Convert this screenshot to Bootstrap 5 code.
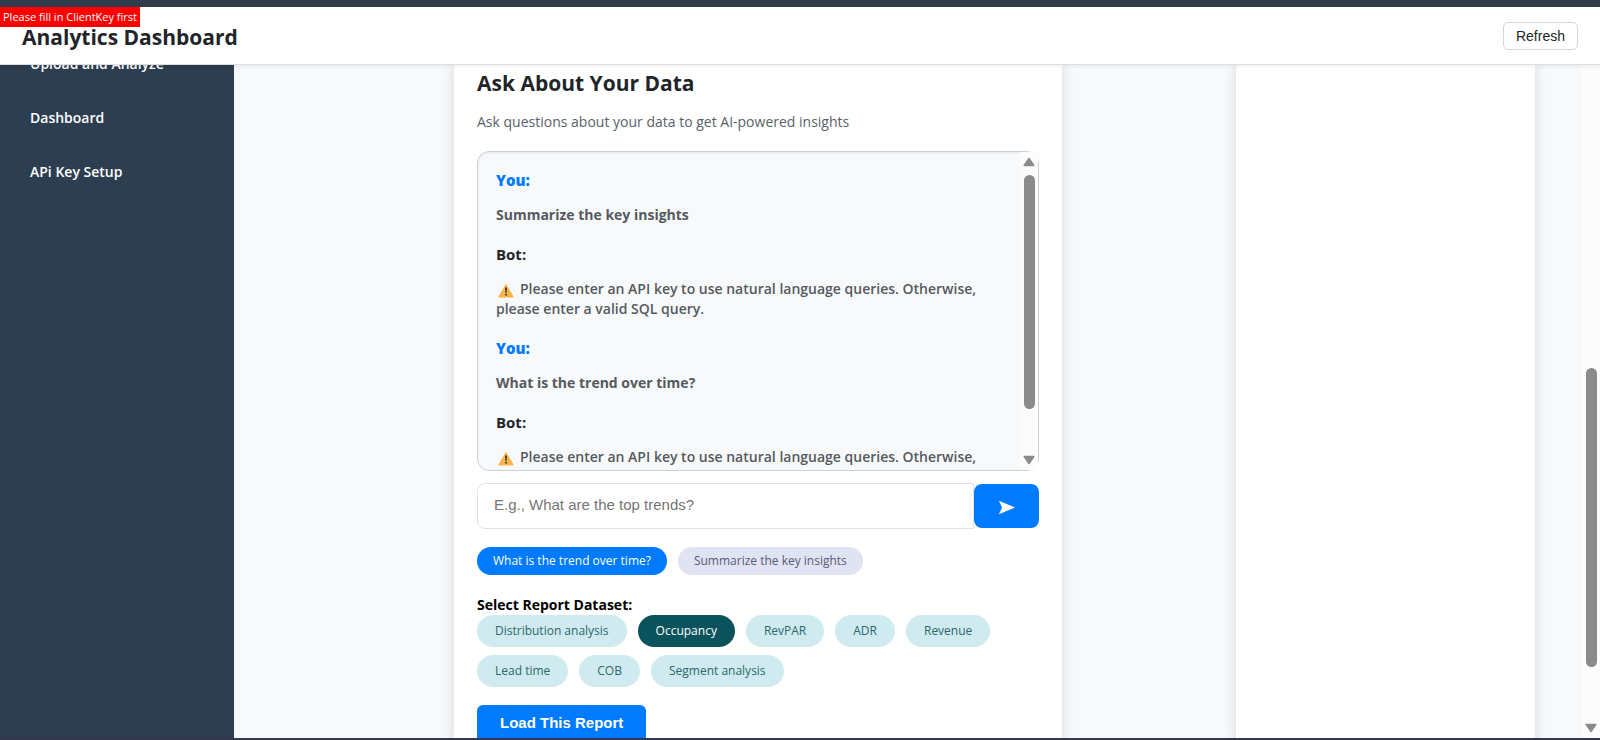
<!DOCTYPE html>
<html lang="en">
<head>
<meta charset="utf-8">
<meta name="viewport" content="width=device-width, initial-scale=1">
<title>Analytics Dashboard</title>
<link href="https://cdn.jsdelivr.net/npm/bootstrap@5.3.0/dist/css/bootstrap.min.css" rel="stylesheet">
<style>
  body { font-family: "Open Sans", "Noto Sans", sans-serif; font-size: 14px; line-height: 20px; color: #212529; background: #f8f9fb; border-top: 7px solid #323c4c; border-bottom: 2px solid #34374f; }
  .topbar { height: 58px; border-bottom: 1px solid #dcdee2; box-shadow: 0 2px 4px rgba(0,0,0,.06); z-index: 2; padding: 0 22px; }
  .page-title, .section-title { font-size: 21px; line-height: 28px; font-weight: 700; }
  .page-title { padding-top: 2px; }
  .btn-refresh { font: 14px/18px "Liberation Sans", sans-serif; padding: 4px 12px; border: 1px solid #d3d6e0; border-radius: 5px; color: #212529; background: #fff; }
  .toast-error { background: #f00; color: #fff; font-size: 11px; line-height: 20px; padding: 0 3px; z-index: 3; }
  .sidebar { width: 234px; background: #2c3e50; }
  .sidebar .nav { margin-top: -28px; }
  .sidebar .nav-link { color: #fff; font-size: 14px; font-weight: 600; padding: 17px 30px; }
  .workspace { display: grid; grid-template-columns: 220fr 608fr 174fr 299fr 47fr; }
  .panel { background: #fff; box-shadow: 0 0 12px rgba(0,0,0,.14); min-width: 0; }
  .ask-panel { grid-column: 2; padding: 4px 23px 0; }
  .side-panel { grid-column: 4; }
  .lead-text { color: #5a6169; margin: 15px 0 19px; }
  .chat-box { height: 320px; background: #f8f9fb; border: 1px solid #ced0d8; border-radius: 12px; box-shadow: inset 0 1px 2px rgba(0,0,0,.08); }
  .chat-log { padding: 18px 18px 0; }
  .chat-log h3 { font-size: 15px; line-height: 20px; font-weight: 700; margin: 0 0 15px; }
  .chat-log .from-user { color: #007bff; font-weight: 800; }
  .chat-log p { margin: 0 0 19px; color: #555a60; font-weight: 600; }
  .chat-log .question { font-weight: 700; }
  .scroll-track { width: 18px; background: #fcfcfc; padding: 5px 0; }
  .scroll-thumb { width: 11px; border-radius: 6px; background: #8b8b8b; }
  .ask-input { font: 15px/20px "Liberation Sans", sans-serif; height: 46px; border: 1px solid #dde3ea; border-radius: 8px 0 0 8px; padding: 0 16px 4px; }
  .ask-input::placeholder { color: #757575; }
  .btn-send { width: 65px; height: 44px; background: #007bff; border: 0; border-radius: 8px; }
  .chip { border: 0; border-radius: 17px; white-space: nowrap; font-size: 12px; line-height: 20px; }
  .chip-prompt { padding: 4px 16px; background: #e0e3f1; color: #565b78; }
  .chip-prompt.active { background: #007bff; color: #fff; }
  .chip-data { padding: 6px 18px; background: #d0ebef; color: #2c666e; }
  .chip-data.active { background: #0b535c; color: #fff; }
  .chip-row { gap: 8px 11px; }
  .prompt-row { margin-top: 18px; }
  .dataset-label { font-size: 14px; line-height: 20px; }
  .btn-load { font: 700 15px/20px "Liberation Sans", sans-serif; padding: 8px 23px 12px; border: 0; border-radius: 6px; background: #007bff; color: #fff; margin-top: 18px; }
</style>
</head>
<body class="vh-100 d-flex flex-column overflow-hidden">
  <header class="topbar bg-white d-flex align-items-center justify-content-between position-relative flex-shrink-0">
    <div class="toast-error position-absolute top-0 start-0" role="alert">Please fill in ClientKey first</div>
    <h1 class="page-title mb-0">Analytics Dashboard</h1>
    <button type="button" class="btn-refresh">Refresh</button>
  </header>

  <div class="d-flex flex-fill overflow-hidden">
    <aside class="sidebar flex-shrink-0 overflow-hidden">
      <nav class="nav flex-column">
        <a class="nav-link" href="#upload">Upload and Analyze</a>
        <a class="nav-link" href="#dashboard">Dashboard</a>
        <a class="nav-link" href="#api-key">APi Key Setup</a>
      </nav>
    </aside>

    <main class="workspace flex-fill overflow-hidden">
      <section class="panel ask-panel">
        <h2 class="section-title m-0">Ask About Your Data</h2>
        <p class="lead-text">Ask questions about your data to get AI-powered insights</p>

        <div class="chat-box d-flex">
          <div class="chat-log flex-fill overflow-hidden">
            <h3 class="from-user">You:</h3>
            <p class="question">Summarize the key insights</p>
            <h3>Bot:</h3>
            <p><svg class="me-1" width="20" height="15" viewBox="0 0 20 15" aria-hidden="true"><path d="M10 1.500L17.300 14H2.700Z" fill="#fbb54c" stroke="#fbb54c" stroke-linejoin="round"/><path d="M9 4.500h2l-.4 5.500H9.400z" fill="#3d3a36"/><circle cx="10" cy="11.800" r="1" fill="#3d3a36"/></svg>Please enter an API key to use natural language queries. Otherwise, please enter a valid SQL query.</p>
            <h3 class="from-user">You:</h3>
            <p class="question">What is the trend over time?</p>
            <h3>Bot:</h3>
            <p><svg class="me-1" width="20" height="15" viewBox="0 0 20 15" aria-hidden="true"><path d="M10 1.500L17.300 14H2.700Z" fill="#fbb54c" stroke="#fbb54c" stroke-linejoin="round"/><path d="M9 4.500h2l-.4 5.500H9.400z" fill="#3d3a36"/><circle cx="10" cy="11.800" r="1" fill="#3d3a36"/></svg>Please enter an API key to use natural language queries. Otherwise, please enter a valid SQL query.</p>
          </div>
          <div class="scroll-track d-flex flex-column align-items-center flex-shrink-0" aria-hidden="true">
            <svg class="flex-shrink-0 mb-2" width="12" height="10" viewBox="0 0 12 10"><path d="M6 1.500L10.800 8.500H1.200Z" fill="#8b8b8b" stroke="#8b8b8b" stroke-width="1.500" stroke-linejoin="round"/></svg>
            <div class="scroll-thumb" style="height:76%"></div>
            <svg class="flex-shrink-0 mt-auto" width="12" height="10" viewBox="0 0 12 10"><path d="M6 8.500L10.800 1.500H1.200Z" fill="#8b8b8b" stroke="#8b8b8b" stroke-width="1.500" stroke-linejoin="round"/></svg>
          </div>
        </div>

        <form class="d-flex align-items-center mt-2 pt-1">
          <input class="ask-input flex-fill" type="text" aria-label="Question" placeholder="E.g., What are the top trends?">
          <button type="button" class="btn-send flex-shrink-0" aria-label="Send"><svg width="18" height="15" viewBox="0 0 20 16" aria-hidden="true"><path d="M1 .5L19 8L1 15.500L4.500 8Z" fill="#fff"/></svg></button>
        </form>

        <div class="chip-row prompt-row d-flex flex-wrap">
          <button type="button" class="chip chip-prompt active">What is the trend over time?</button>
          <button type="button" class="chip chip-prompt">Summarize the key insights</button>
        </div>

        <h3 class="dataset-label fw-bold text-black mb-0 mt-3 pt-1">Select Report Dataset:</h3>
        <div class="chip-row d-flex flex-wrap">
          <button type="button" class="chip chip-data">Distribution analysis</button>
          <button type="button" class="chip chip-data active">Occupancy</button>
          <button type="button" class="chip chip-data">RevPAR</button>
          <button type="button" class="chip chip-data">ADR</button>
          <button type="button" class="chip chip-data">Revenue</button>
          <button type="button" class="chip chip-data">Lead time</button>
          <button type="button" class="chip chip-data">COB</button>
          <button type="button" class="chip chip-data">Segment analysis</button>
        </div>
        <button type="button" class="btn-load">Load This Report</button>
      </section>
      <section class="panel side-panel" aria-label="Report preview"></section>
    </main>

    <div class="scroll-track d-flex flex-column align-items-center flex-shrink-0" aria-hidden="true">
      <div class="flex-shrink-0" style="height:45%"></div>
      <div class="scroll-thumb flex-shrink-0" style="height:45%"></div>
      <svg class="flex-shrink-0 mt-auto" width="12" height="10" viewBox="0 0 12 10"><path d="M6 8.500L10.800 1.500H1.200Z" fill="#8b8b8b" stroke="#8b8b8b" stroke-width="1.500" stroke-linejoin="round"/></svg>
    </div>
  </div>
<script src="https://cdn.jsdelivr.net/npm/bootstrap@5.3.0/dist/js/bootstrap.bundle.min.js"></script>
</body>
</html>
